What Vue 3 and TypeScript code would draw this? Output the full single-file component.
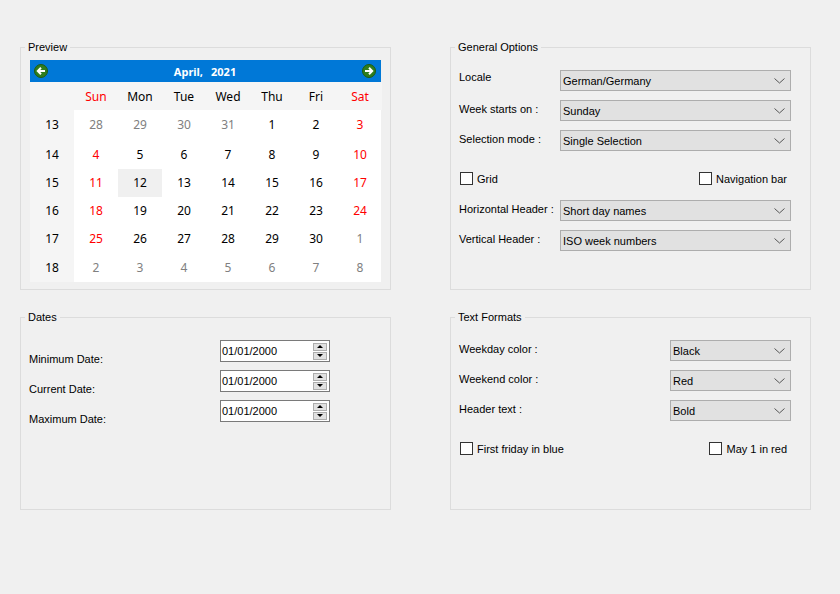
<script setup lang="ts">
interface Day {
  label: number;
  kind: 'muted' | 'weekend' | 'plain';
  selected: boolean;
}

const dayNames = ['Sun', 'Mon', 'Tue', 'Wed', 'Thu', 'Fri', 'Sat'];
const weeks = [13, 14, 15, 16, 17, 18];

// April 2021, sunday first, the grid starts on 28 March
const first = new Date(2021, 2, 28);

function dayRow(row: number): Day[] {
  const days: Day[] = [];
  for (let col = 0; col < 7; col++) {
    const d = new Date(first.getFullYear(), first.getMonth(), first.getDate() + row * 7 + col);
    const inMonth = d.getMonth() === 3;
    days.push({
      label: d.getDate(),
      kind: !inMonth ? 'muted' : col === 0 || col === 6 ? 'weekend' : 'plain',
      selected: inMonth && d.getDate() === 12,
    });
  }
  return days;
}

const dateRows = ['Minimum Date:', 'Current Date:', 'Maximum Date:'];
const topRows = [
  { label: 'Locale', value: 'German/Germany', raised: true },
  { label: 'Week starts on :', value: 'Sunday', raised: false },
  { label: 'Selection mode :', value: 'Single Selection', raised: false },
];
const headerRows = [
  { label: 'Horizontal Header :', value: 'Short day names' },
  { label: 'Vertical Header :', value: 'ISO week numbers' },
];
const formatRows = [
  { label: 'Weekday color :', value: 'Black' },
  { label: 'Weekend color :', value: 'Red' },
  { label: 'Header text :', value: 'Bold' },
];
</script>

<template>
  <div class="page">
    <fieldset class="group">
      <legend>Preview</legend>
      <div class="calendar">
        <div class="cal-nav">
          <svg class="nav-icon" width="14" height="14" viewBox="0 0 14 14">
            <circle cx="7" cy="7" r="6.5" fill="#2f7d1e" stroke="#1f5c12" />
            <path d="M11 7H4.500M7 3.800 3.800 7 7 10.200" fill="none" stroke="#fff" stroke-width="2" />
          </svg>
          <span class="cal-title"><span>April,</span><span>2021</span></span>
          <svg class="nav-icon" width="14" height="14" viewBox="0 0 14 14">
            <circle cx="7" cy="7" r="6.500" fill="#2f7d1e" stroke="#1f5c12" />
            <path d="M3 7H9.500M7 3.800 10.200 7 7 10.200" fill="none" stroke="#fff" stroke-width="2" />
          </svg>
        </div>
        <div class="cal-grid">
          <div class="cal-head" />
          <div
            v-for="(name, i) in dayNames"
            :key="name"
            class="cal-head"
            :class="{ weekend: i === 0 || i === 6 }"
          >
            {{ name }}
          </div>
          <template v-for="(week, row) in weeks" :key="week">
            <div class="cal-week">{{ week }}</div>
            <div
              v-for="day in dayRow(row)"
              :key="day.label"
              class="cal-day"
              :class="[day.kind, { selected: day.selected }]"
            >
              {{ day.label }}
            </div>
          </template>
        </div>
      </div>
    </fieldset>

    <fieldset class="group">
      <legend>General Options</legend>
      <div class="form wide">
        <template v-for="row in topRows" :key="row.label">
          <label class="form-label" :class="{ raised: row.raised }">{{ row.label }}</label>
          <div class="combo">
            <span>{{ row.value }}</span>
            <svg width="11" height="6" viewBox="0 0 11 6"><path d="M.5.5 5.500 5l5-4.500" fill="none" stroke="#555" /></svg>
          </div>
        </template>
      </div>
      <div class="checks options-checks">
        <label class="check"><span class="box" />Grid</label>
        <label class="check"><span class="box" />Navigation bar</label>
      </div>
      <div class="form wide tight">
        <template v-for="row in headerRows" :key="row.label">
          <label class="form-label">{{ row.label }}</label>
          <div class="combo">
            <span>{{ row.value }}</span>
            <svg width="11" height="6" viewBox="0 0 11 6"><path d="M.5.5 5.500 5l5-4.500" fill="none" stroke="#555" /></svg>
          </div>
        </template>
      </div>
    </fieldset>

    <fieldset class="group">
      <legend>Dates</legend>
      <div class="dates">
        <template v-for="label in dateRows" :key="label">
          <label class="date-label">{{ label }}</label>
          <div class="date-edit">
            <span>01/01/2000</span>
            <div class="spin">
              <div class="spin-btn"><i class="tri up" /></div>
              <div class="spin-btn"><i class="tri down" /></div>
            </div>
          </div>
        </template>
      </div>
    </fieldset>

    <fieldset class="group">
      <legend>Text Formats</legend>
      <div class="form narrow">
        <template v-for="row in formatRows" :key="row.label">
          <label class="form-label">{{ row.label }}</label>
          <div class="combo">
            <span>{{ row.value }}</span>
            <svg width="11" height="6" viewBox="0 0 11 6"><path d="M.5.5 5.500 5l5-4.500" fill="none" stroke="#555" /></svg>
          </div>
        </template>
      </div>
      <div class="checks">
        <label class="check"><span class="box" />First friday in blue</label>
        <label class="check"><span class="box" />May 1 in red</label>
      </div>
    </fieldset>
  </div>
</template>

<style>
html,
body {
  margin: 0;
  background: #f0f0f0;
}
</style>

<style scoped>
.page {
  box-sizing: border-box;
  width: 840px;
  height: 594px;
  padding: 40px 29px 0 20px;
  display: grid;
  grid-template-columns: 371px 361px;
  grid-template-rows: 250px 200px;
  column-gap: 59px;
  row-gap: 20px;
  background: #f0f0f0;
  color: #000;
  font-family: "Liberation Sans", Arial, sans-serif;
  font-size: 11px;
  line-height: 14px;
}

.group {
  box-sizing: border-box;
  min-width: 0;
  margin: 0;
  padding: 6px 9px 0;
  border: 1px solid #dcdcdc;
}

.group legend {
  margin-left: -5px;
  padding: 0 3px;
}

.calendar {
  width: 351px;
  font-family: "Noto Sans", sans-serif;
}

.cal-nav {
  height: 22px;
  padding: 0 5px 1px 4px;
  box-sizing: border-box;
  display: flex;
  align-items: center;
  justify-content: space-between;
  background: #0078d7;
  color: #fff;
  font-weight: 700;
}

.nav-icon {
  display: block;
}

.cal-title {
  display: flex;
  gap: 8px;
  padding-top: 2px;
}

.cal-grid {
  display: grid;
  grid-template-columns: repeat(8, 44px);
  grid-template-rows: 28px 30px 29px 28px 28px 28px 29px;
  height: 200px;
  background: #fff;
}

.cal-head,
.cal-week,
.cal-day {
  display: flex;
  align-items: center;
  justify-content: center;
  font-size: 12px;
}

.cal-head {
  padding-top: 2px;
}

.cal-head,
.cal-week {
  background: #f5f5f5;
}

.weekend {
  color: #ff0000;
}

.muted {
  color: #808080;
}

.selected {
  background: #f0f0f0;
}

.form {
  display: grid;
  row-gap: 9px;
  padding-top: 10px;
  margin-left: -1px;
}

.form.tight {
  padding-top: 15px;
}

.wide {
  grid-template-columns: 101px 231px;
}

.narrow {
  grid-template-columns: 211px 121px;
}

.form-label {
  padding-top: 2px;
}

.form-label.raised {
  padding-top: 0;
}

.combo {
  box-sizing: border-box;
  height: 21px;
  padding: 1px 5px 0 2px;
  display: flex;
  align-items: center;
  justify-content: space-between;
  background: #e1e1e1;
  border: 1px solid #adadad;
}

.checks {
  display: flex;
  justify-content: space-between;
  padding: 21px 14px 0 0;
}

.check {
  display: flex;
  align-items: center;
  gap: 4px;
  height: 13px;
}

.box {
  box-sizing: border-box;
  width: 13px;
  height: 13px;
  background: #fff;
  border: 1px solid #333;
}

.dates {
  display: grid;
  grid-template-columns: 191px 110px;
  grid-auto-rows: 22px;
  row-gap: 8px;
  padding-top: 10px;
  margin-left: -1px;
}

.date-label {
  padding-top: 12px;
}

.date-edit {
  box-sizing: border-box;
  height: 22px;
  padding: 0 2px 0 1px;
  display: flex;
  align-items: center;
  justify-content: space-between;
  background: #fff;
  border: 1px solid #7a7a7a;
}

.spin {
  width: 14px;
  display: flex;
  flex-direction: column;
  gap: 1px;
}

.spin-btn {
  box-sizing: border-box;
  height: 8px;
  display: flex;
  align-items: center;
  justify-content: center;
  background: #e1e1e1;
  border: 1px solid #adadad;
}

.tri {
  width: 0;
  height: 0;
  border-left: 3px solid transparent;
  border-right: 3px solid transparent;
}

.tri.up {
  border-bottom: 3px solid #000;
}

.tri.down {
  border-top: 3px solid #000;
}
</style>
